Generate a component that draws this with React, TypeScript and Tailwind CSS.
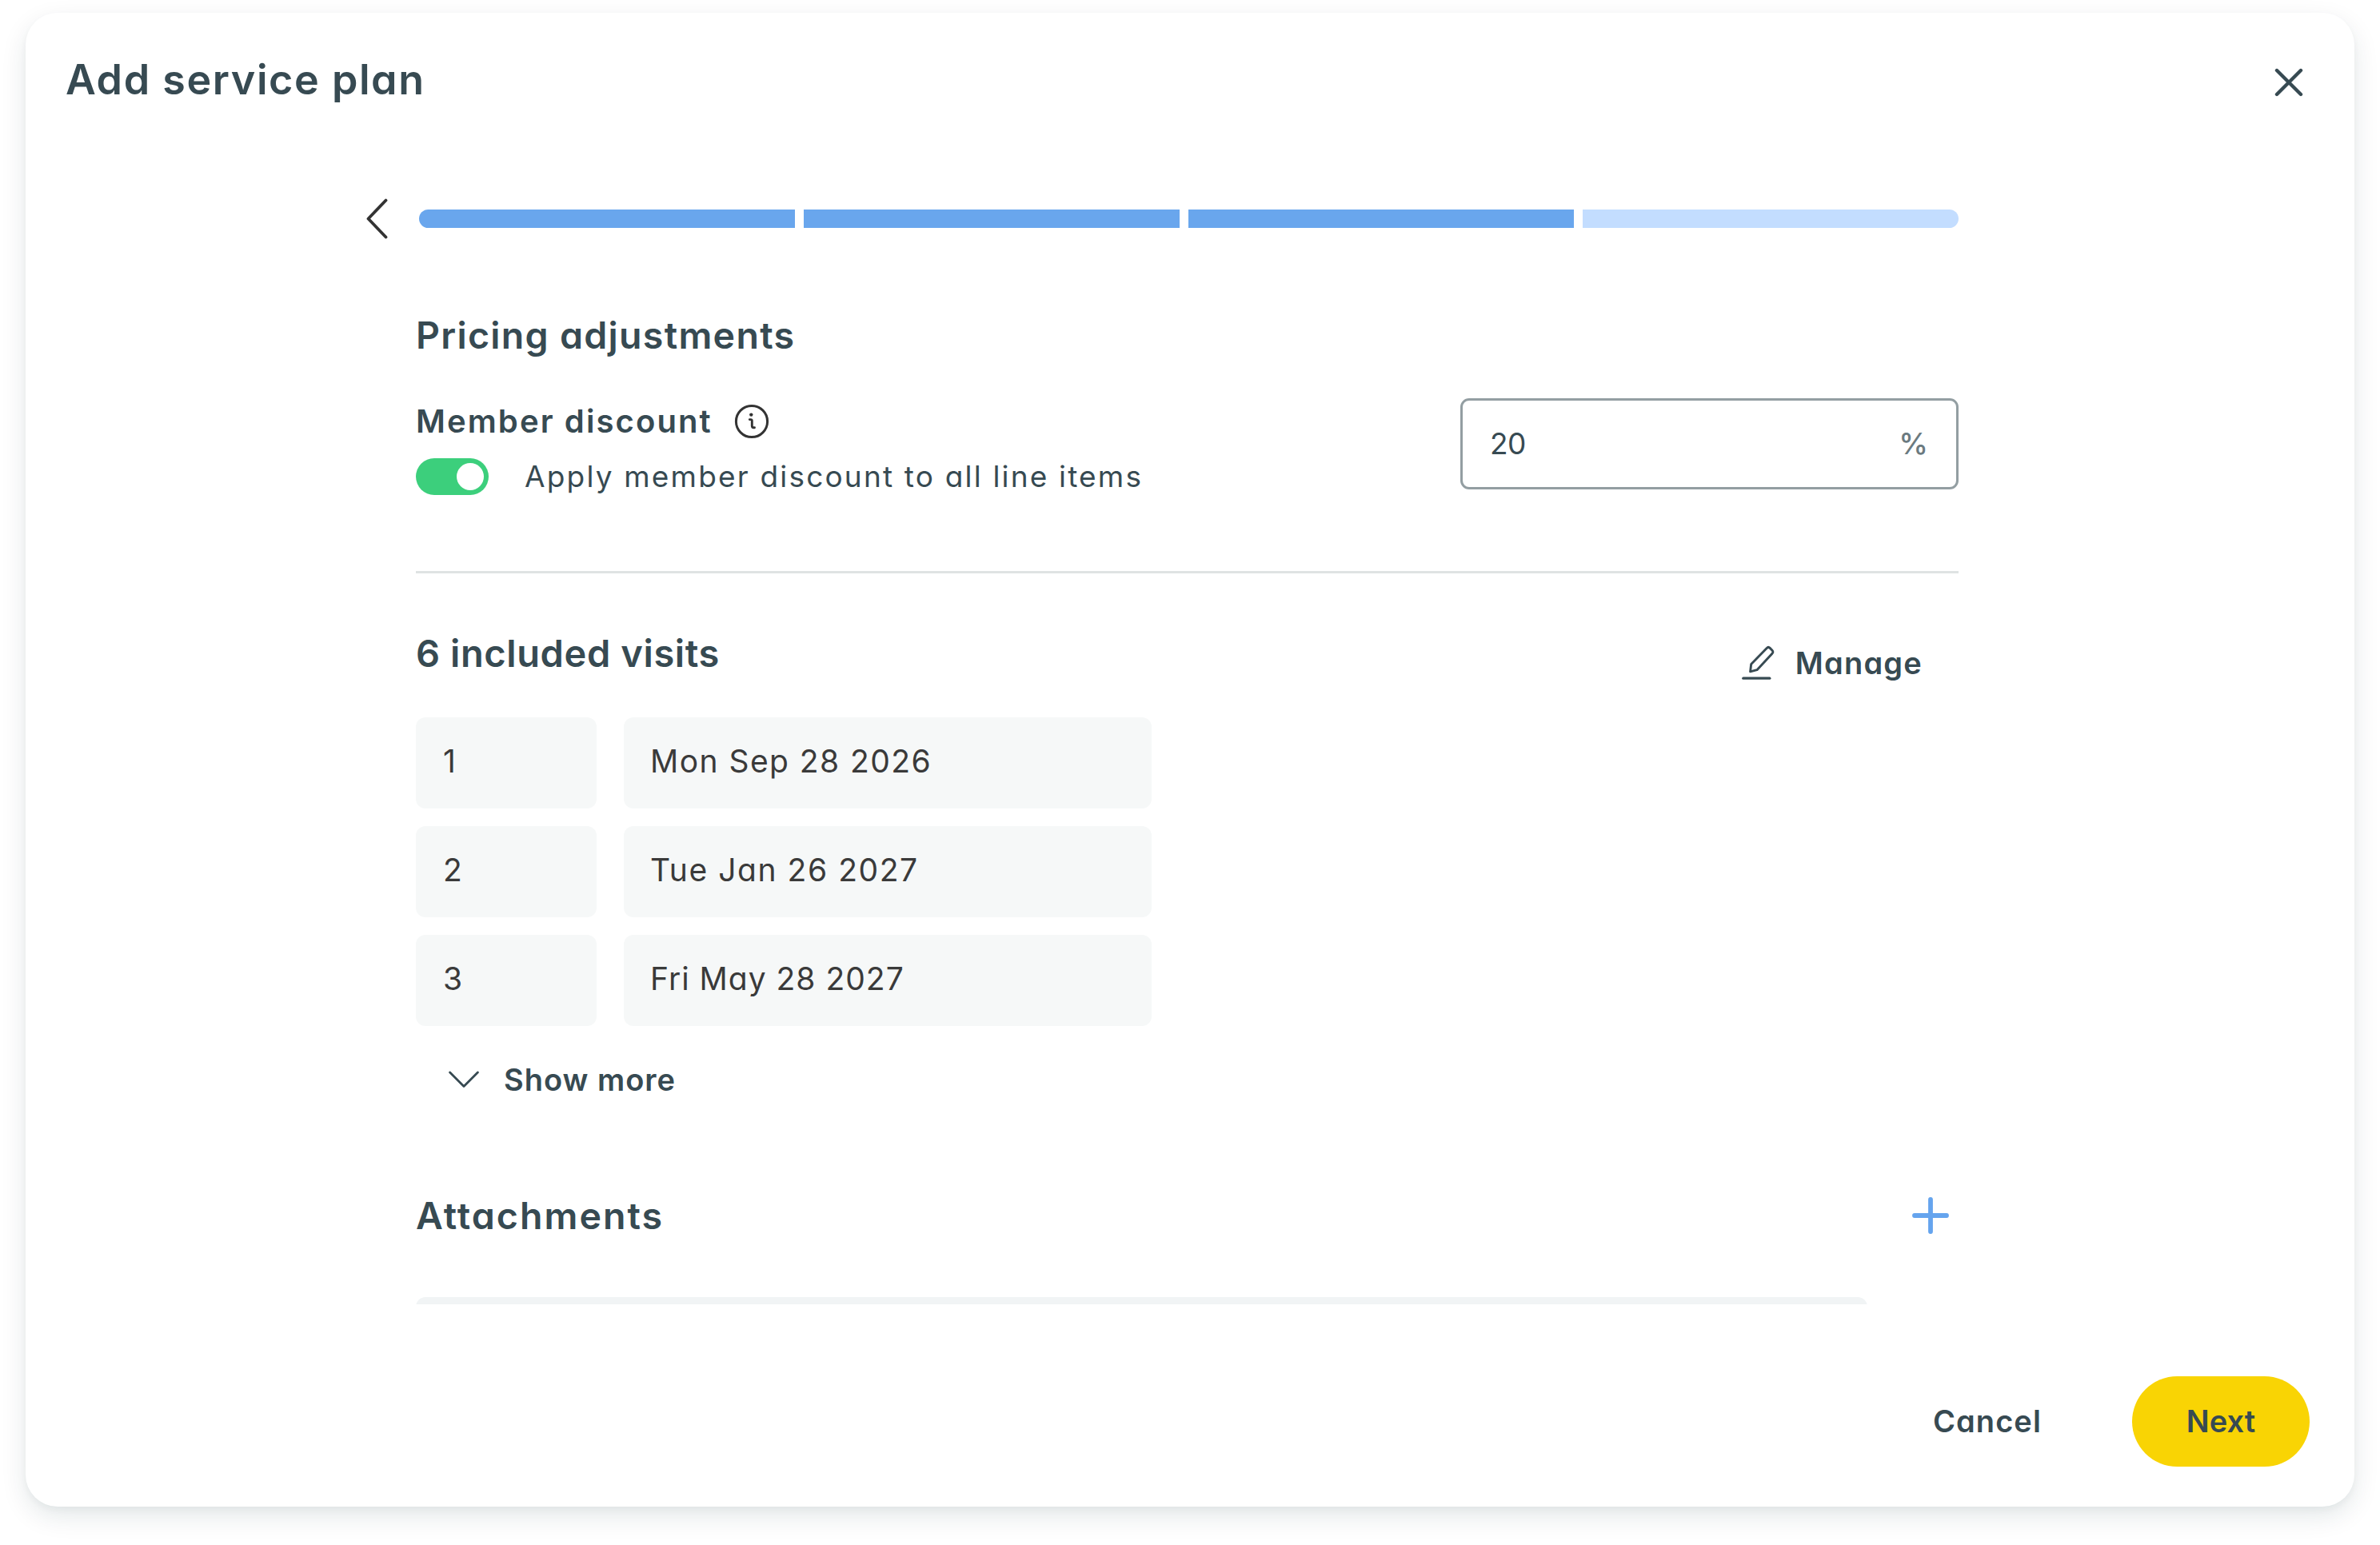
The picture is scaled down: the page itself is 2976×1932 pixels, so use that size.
import { useState } from 'react';
import clsx from 'clsx';

const VISITS = [
  { id: 1, date: 'Mon Sep 28 2026', tracking: 'tracking-[1.45px]' },
  { id: 2, date: 'Tue Jan 26 2027', tracking: 'tracking-[1.55px]' },
  { id: 3, date: 'Fri May 28 2027', tracking: 'tracking-[1px]' },
];

const STEPS = [
  'w-[470px] rounded-l-full bg-[#69a6ed]',
  'w-[470px] bg-[#69a6ed]',
  'w-[482px] bg-[#69a6ed]',
  'w-[470px] rounded-r-full bg-[#c3ddff]',
];

function CloseIcon() {
  return (
    <svg width="36" height="36" viewBox="0 0 36 36" fill="none" stroke="#374a52" strokeWidth="4.4" strokeLinecap="round">
      <path d="M3 3l30 30M33 3L3 33" />
    </svg>
  );
}

function BackIcon() {
  return (
    <svg width="28" height="51" viewBox="0 0 28 51" fill="none" stroke="#333333" strokeWidth="3.8" strokeLinecap="round" strokeLinejoin="round">
      <path d="M24.5 2.5L2.5 25.5l22 23" />
    </svg>
  );
}

function InfoIcon() {
  return (
    <svg width="44" height="44" viewBox="0 0 44 44" fill="none" stroke="#333333" strokeLinecap="round" strokeLinejoin="round">
      <circle cx="22" cy="22" r="19.6" strokeWidth="3" />
      <circle cx="21.3" cy="13.6" r="2.2" fill="#333333" stroke="none" />
      <path d="M19.3 19.6h1.4c1 0 1.6.7 1.6 1.6v6.4c0 1.4.8 2.2 2 2.2h1.2" strokeWidth="2.9" />
    </svg>
  );
}

function PencilIcon() {
  return (
    <svg width="42" height="44" viewBox="0 0 42 44" fill="none" stroke="#374a52" strokeWidth="2.9" strokeLinecap="round" strokeLinejoin="round">
      <path d="M10.6 32.8l1.1-9.4L31.2 3.4c1.2-1.2 2.8-1.2 4 0l2.8 2.8c1.2 1.2 1.2 2.8 0 4L19 30.7z" />
      <path d="M1.8 41.2h33" strokeWidth="3.3" />
    </svg>
  );
}

function ChevronDownIcon() {
  return (
    <svg width="38" height="22" viewBox="0 0 38 22" fill="none" stroke="#374a52" strokeWidth="2.8" strokeLinecap="round" strokeLinejoin="round">
      <path d="M1.6 2L19 19.4 36.4 2" />
    </svg>
  );
}

function PlusIcon() {
  return (
    <svg width="46" height="46" viewBox="0 0 46 46" fill="none" stroke="#65a4ee" strokeWidth="5.8" strokeLinecap="round">
      <path d="M23 3v40M3 23h40" />
    </svg>
  );
}

export default function App() {
  const [applyDiscount, setApplyDiscount] = useState(true);

  return (
    <div className="h-[1932px] w-[2976px] overflow-hidden bg-white px-8 pt-4 font-['Inter',sans-serif] text-[#374a52] [font-feature-settings:'cv11']">
      <div className="h-[1868px] rounded-[40px] bg-white pt-12 shadow-[0_4px_8px_rgba(3,43,58,0.04),0_12px_32px_rgba(3,43,58,0.11)]">
        <header className="flex h-[72px] items-center justify-between pr-16 pl-[50px]">
          <h1 className="text-[52px] leading-[72px] font-semibold tracking-[1.57px]">Add service plan</h1>
          <button className="mt-[5px]" aria-label="Close">
            <CloseIcon />
          </button>
        </header>

        <div className="mt-28 ml-[426px] w-[1992px]">
          <div className="flex items-center">
            <button aria-label="Back">
              <BackIcon />
            </button>
            <div className="ml-[38px] flex gap-[11px]">
              {STEPS.map((step, i) => (
                <div key={i} className={clsx('h-[23px]', step)} />
              ))}
            </div>
          </div>

          <main className="ml-[62px]">
            <h2 className="mt-[87px] text-[46.5px] leading-[66px] font-semibold tracking-[1.3px]">Pricing adjustments</h2>

            <div className="mt-[46px] flex h-[121px] items-start justify-between pr-px">
              <div className="pt-px">
                <div className="flex h-14 items-center gap-[27px]">
                  <h3 className="text-[40px] font-semibold tracking-[2.1px]">Member discount</h3>
                  <InfoIcon />
                </div>
                <div className="mt-[18px] flex h-[46px] items-center gap-[45px]">
                  <button
                    role="switch"
                    aria-checked={applyDiscount}
                    onClick={() => setApplyDiscount(!applyDiscount)}
                    className={clsx(
                      'flex h-[46px] w-[91px] items-center rounded-full px-1.5',
                      applyDiscount ? 'justify-end bg-[#3ccf7c]' : 'justify-start bg-[#9aa5a9]',
                    )}
                  >
                    <span className="size-[34px] rounded-full bg-white" />
                  </button>
                  <span className="text-[37px] leading-[46px] tracking-[2.18px]">Apply member discount to all line items</span>
                </div>
              </div>

              <div className="flex h-[114px] w-[623px] items-center justify-between rounded-[11px] border-[3px] border-[#939ea2] pr-[35px] pb-px pl-[34px] text-[37px]">
                <span className="tracking-[-0.5px]">20</span>
                <span className="font-medium text-[#6b7a80]">%</span>
              </div>
            </div>

            <div className="mt-[95px] mr-px h-[3px] bg-[#dfe3e3]" />

            <div className="mt-[66px] flex h-[114px] items-start justify-between pr-[46px]">
              <h2 className="text-[47px] leading-[68px] font-semibold tracking-[0.6px]">6 included visits</h2>
              <button className="mt-[19px] flex h-[54px] items-center gap-[25px]">
                <PencilIcon />
                <span className="text-[38px] font-semibold tracking-[1.2px]">Manage</span>
              </button>
            </div>

            <div className="grid gap-[22px]">
              {VISITS.map((visit) => (
                <div key={visit.id} className="flex gap-[34px] text-[39px] text-[#3a3a3a]">
                  <div className="flex h-[114px] w-[226px] items-center rounded-xl bg-[#f6f8f8] pb-[3px] pl-[34px]">{visit.id}</div>
                  <div className="flex h-[114px] w-[660px] items-center rounded-xl bg-[#f6f8f8] pb-[3px] pl-[33px]">
                    <span className={visit.tracking}>{visit.date}</span>
                  </div>
                </div>
              ))}
            </div>

            <button className="mt-10 ml-[41px] flex h-[54px] items-center gap-[31px]">
              <ChevronDownIcon />
              <span className="text-[38px] font-semibold tracking-[1px]">Show more</span>
            </button>

            <div className="mt-[110px] flex h-[66px] items-center justify-between pr-[13px]">
              <h2 className="text-[46.5px] leading-[66px] font-semibold tracking-[2.05px]">Attachments</h2>
              <button aria-label="Add attachment">
                <PlusIcon />
              </button>
            </div>

            <div className="mt-[69px] h-[9px] w-[1815px] overflow-hidden">
              <div className="h-24 rounded-xl bg-[#f1f4f5]" />
            </div>
          </main>
        </div>

        <footer className="mt-[90px] flex items-center justify-end gap-[113px] pr-14 text-[38px] font-semibold">
          <button className="tracking-[1.1px]">Cancel</button>
          <button className="h-[113px] w-[222px] rounded-full bg-[#f9d404] tracking-[0.1px]">Next</button>
        </footer>
      </div>
    </div>
  );
}
